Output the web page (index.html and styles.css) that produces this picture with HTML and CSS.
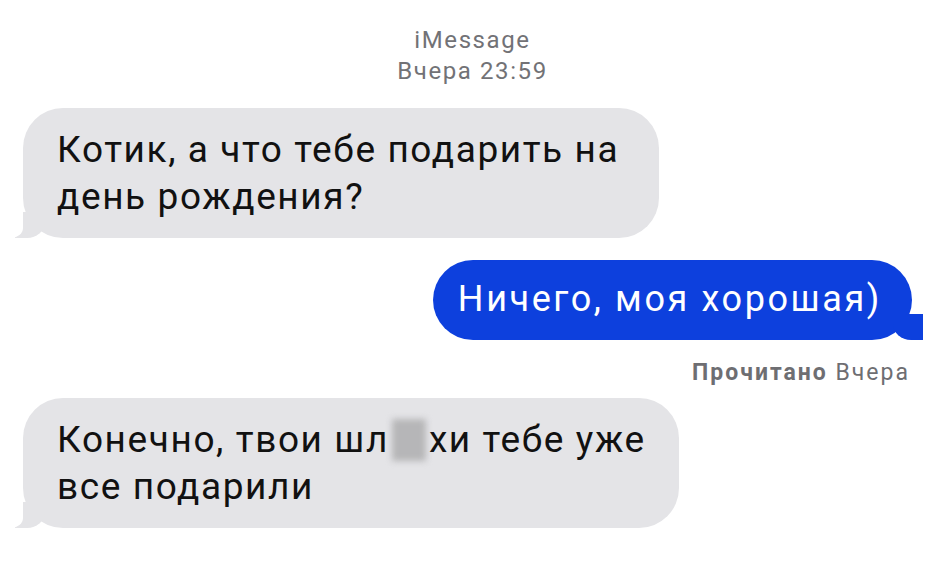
FILE: index.html
```html
<!DOCTYPE html>
<html lang="ru">
<head>
  <meta charset="UTF-8" />
  <meta name="viewport" content="width=device-width, initial-scale=1.0"/>
  <title>iMessage</title>
  <link rel="stylesheet" href="styles.css">
</head>
<body>

  <div class="chat">
    <div class="chat-header">
      <div>iMessage</div>
      <div>Вчера 23:59</div>
    </div>

    <div class="bubble in first">
      Котик, а что тебе подарить на день рождения?
    </div>

    <div class="bubble out">
      Ничего, моя хорошая)
    </div>
    <div class="receipt"><b>Прочитано</b> Вчера</div>

    <div class="bubble in last">
      Конечно, твои шл<span class="censor"></span>хи тебе уже все подарили
    </div>
  </div>

</body>
</html>
```

FILE: styles.css
```css
* {
  box-sizing: border-box;
}

body {
  margin: 0;
  background: #fff;
  font-family: Roboto, 'Liberation Sans', sans-serif;
  color: #111;
}

.chat {
  display: flex;
  flex-direction: column;
  padding: 25px 38px 0 23px;
}

.chat-header {
  text-align: center;
  font-size: 24px;
  line-height: 31px;
  letter-spacing: 1.6px;
  color: #727276;
  margin-bottom: 21px;
  padding-left: 10px;
}

.bubble {
  position: relative;
  font-size: 37px;
  line-height: 47px;
  letter-spacing: 1.6px;
  border-radius: 40px;
  padding: 18px 20px 18px 34px;
}

.bubble.in {
  align-self: flex-start;
  background: #e4e4e7;
}

.bubble.first {
  width: 636px;
  margin-bottom: 22px;
}

.bubble.last {
  width: 656px;
}

.bubble.out {
  align-self: flex-end;
  background: #0d40dd;
  color: #fff;
  font-size: 36px;
  letter-spacing: 2.6px;
  padding: 16px 30px 17px 25px;
}

/* tails */
.bubble::before,
.bubble::after {
  content: "";
  position: absolute;
  bottom: 0;
  height: 26px;
}

.bubble.in::before {
  left: -8px;
  width: 30px;
  background: #e4e4e7;
  border-bottom-right-radius: 18px 16px;
}

.bubble.in::after {
  left: -30px;
  width: 30px;
  background: #fff;
  border-bottom-right-radius: 12px 10px;
}

.bubble.out::before {
  right: -11px;
  width: 30px;
  background: #0d40dd;
  border-bottom-left-radius: 18px 16px;
}

.bubble.out::after {
  right: -36px;
  width: 25px;
  background: #fff;
  border-bottom-left-radius: 12px 10px;
}

.receipt {
  align-self: flex-end;
  font-size: 23px;
  line-height: 26px;
  letter-spacing: 2px;
  color: #6e6e72;
  margin: 20px 2px 12px 0;
}

.receipt b {
  font-weight: 700;
}

.censor {
  display: inline-block;
  width: 34px;
  height: 42px;
  margin: 0 3px;
  vertical-align: -9px;
  background: #b6b6b8;
  filter: blur(3px);
}
```
